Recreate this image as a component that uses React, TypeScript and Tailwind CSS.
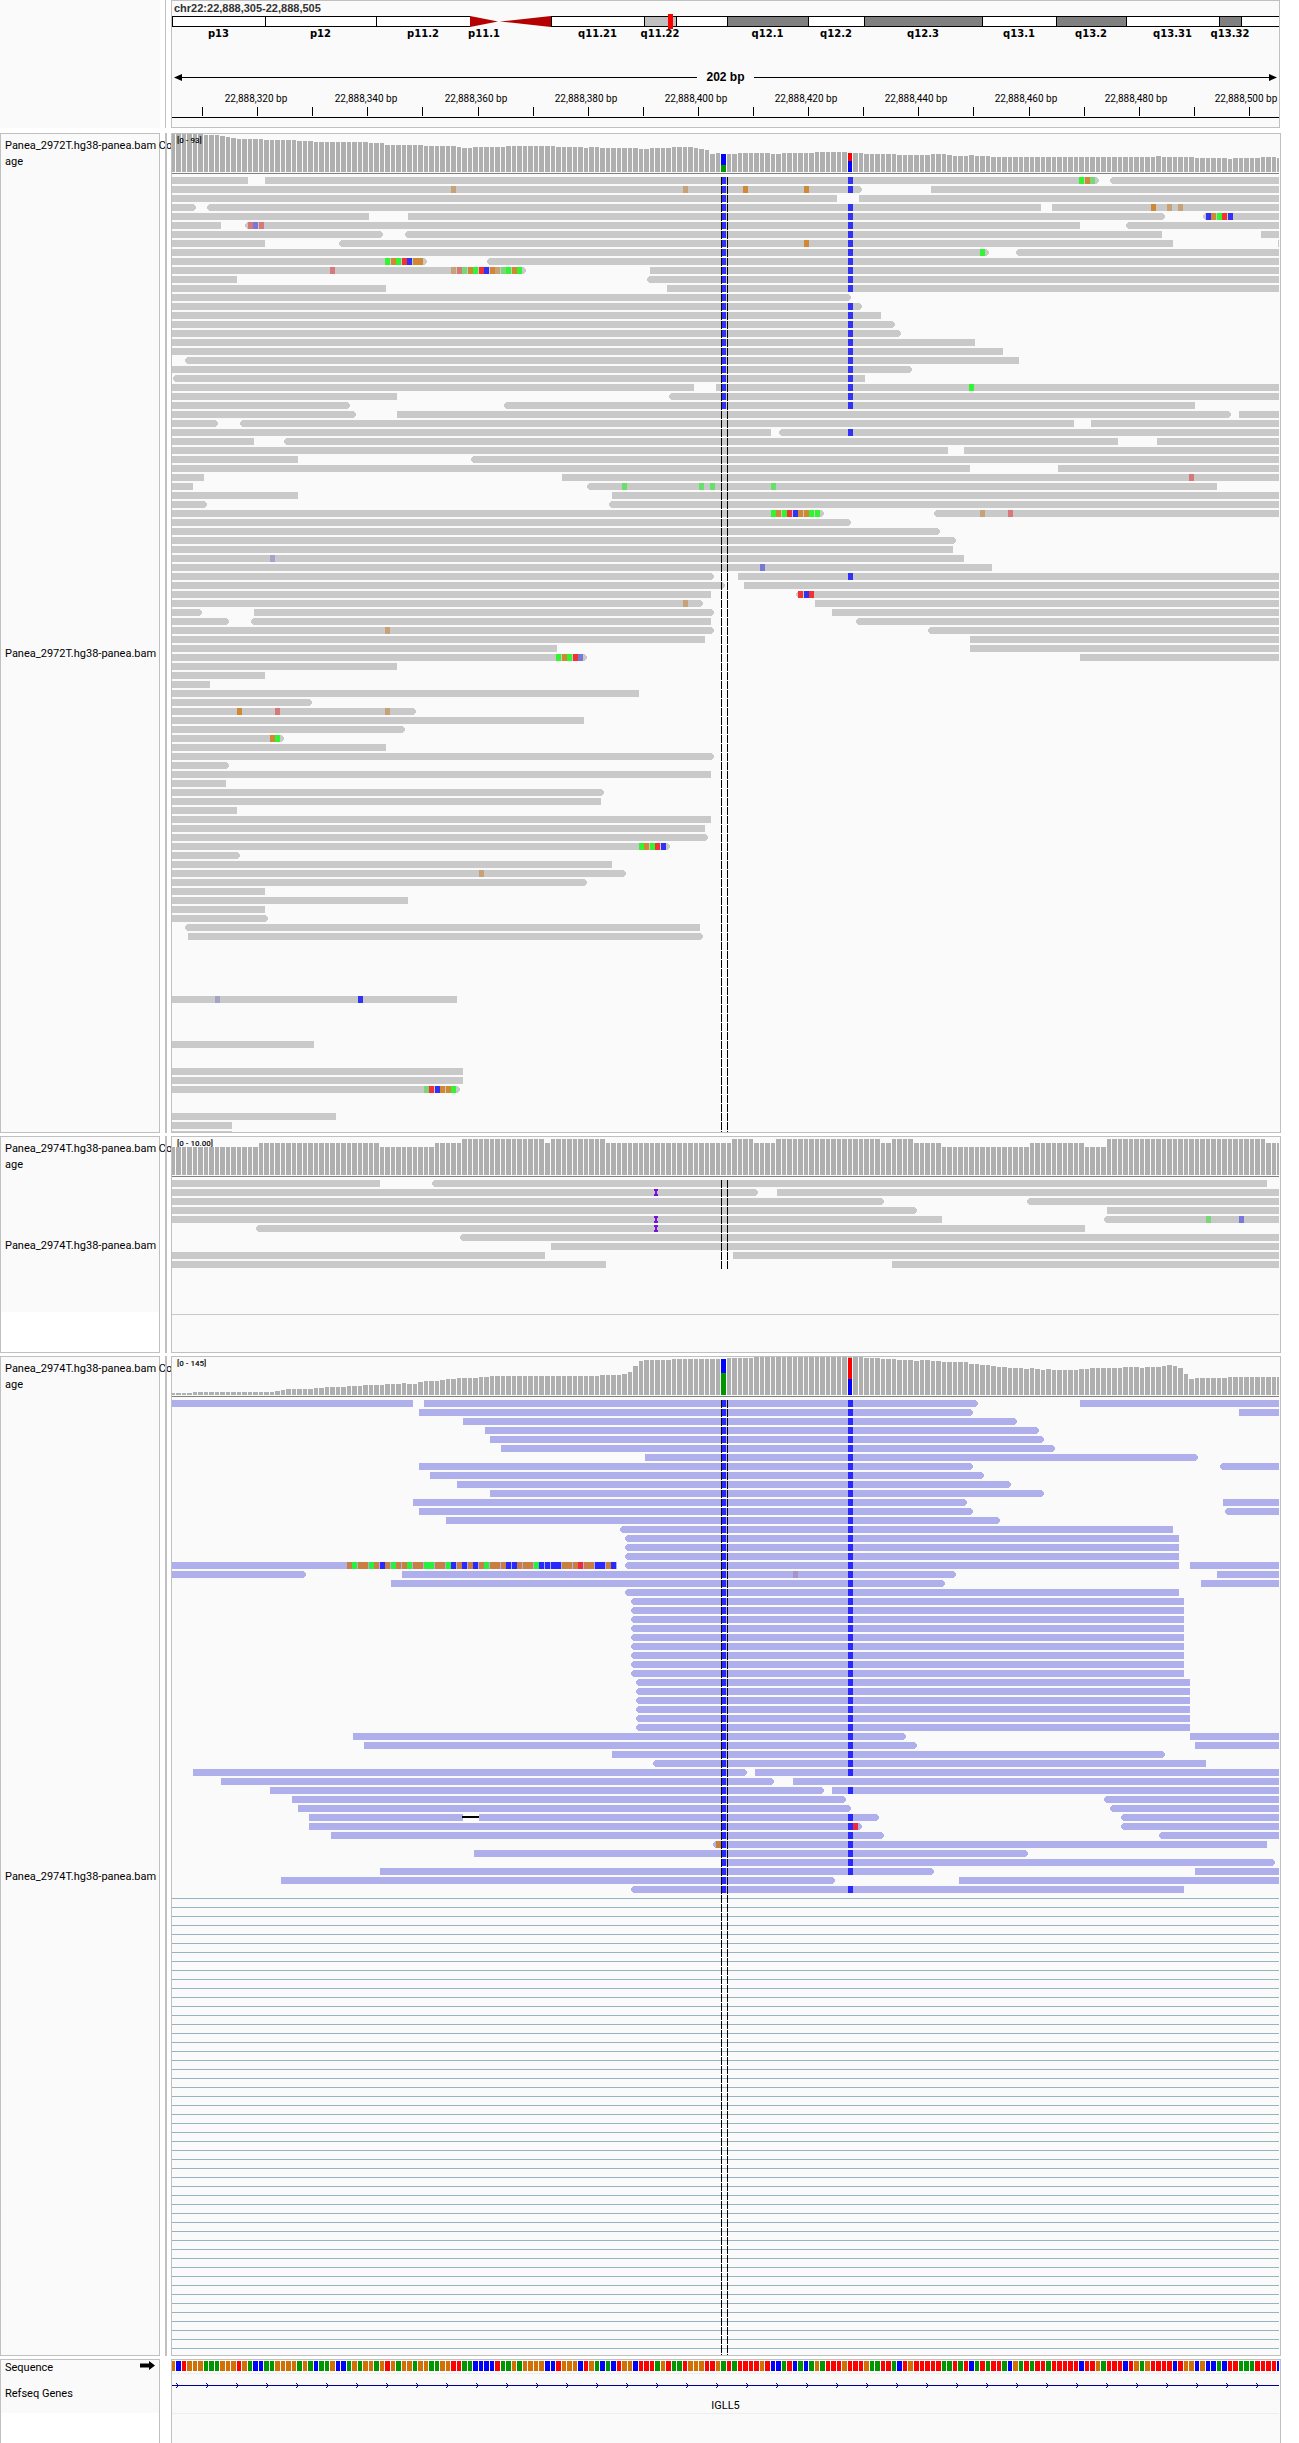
import React from "react";

const PLOT_WIDTH = 1107;
const BASES = 202;
const PITCH = PLOT_WIDTH / 201;
const ROW = 9;
const READ_HEIGHT = 7;

const baseX = (k: number) => Math.round(k * PITCH + 4);
const readX = (k: number) => Math.ceil(k * PITCH + 4);

type Palette = Record<string, string>;

const grayPalette: Palette = {
  read: "#c9c9c9",
  A: "#32f532",
  C: "#3232f5",
  G: "#d08834",
  T: "#f53232",
  a: "#78d878",
  c: "#7878d8",
  g: "#c8a277",
  t: "#d87878",
  m: "#69df69",
  w: "#a4a4c8",
};

const bluePalette: Palette = {
  read: "#afafeb",
  A: "#28f03c",
  C: "#2828ff",
  G: "#c87f41",
  T: "#f02840",
  t: "#a695c8",
};

const sequencePalette: Palette = {
  A: "#009600",
  C: "#0000ff",
  G: "#d17105",
  T: "#ff0000",
};

/* One line per pileup row: "start:end" spans, then mismatching bases after the bar.
   "<" and ">" mark the pointed end of a read, L and R the edges of the view. */
const pileup2972 = `
L:13 16:167> <170:R|99C 122C 164A 165G 166a
L:124> 137:R|50g 92g 99C 103G 114G 122C
L:120 124:R|99C
L:3> <6:157 159:R|99C 122C 177G 180g 182g
L:35 42:179> <187:R|99C 122C 187C 188G 189A 190T 191C
L:8 <13:164 <173:R|13t 14c 15t 99C 122C
L:37> <42:179 197:R|99C 122C
L:16 <30:181 200:R|99C 114G 122C
L:147> <153:R|99C 122C 146A
L:45> <57:R|38A 39G 40A 41T 42C 43G 44G 99C 122C
L:63> 86:R|28t 50g 51t 52a 53G 54A 55T 56C 57G 58g 59a 60A 61G 62A 99C 122C
L:11 <86:R|99C 122C
L:38 89:R|99C 122C
L:122>|99C
L:124>|99C 122C
L:128|99C 122C
L:130>|99C 122C
L:131>|99C 122C
L:145|99C 122C
L:150|99C 122C
<2:153|99C 122C
L:133>|99C 122C
<0:125|99C 122C
L:94 98:R|99C 122C 144A
L:40 <90:R|99C 122C
L:31> <60:185|99C 122C
L:32> 40:191> 193:R|
L:7> <12:163 166:R|
L:108 <110:R|122C
L:14 <20:171 178:R|
L:140 143:R|
L:22 <54:R|
L:144 160:R|
L:5 70:R|184t
L:3 <75:189|81m 95m 97m 108m
L:22 79:R|
L:5> <79:R|
L:117> <138:R|108A 109G 110A 111T 112C 113G 114G 115A 116A 146g 151t
L:122>|
L:138>|
L:141>|
L:141|
L:143|17w
L:148|106c
L:97> 102:R|122C
L:99> 103:R|
L:97 <113:R|113T 114C 115T
L:95> 116:R|92g
L:4> 14:97> 119:R|
L:9> <14:97 <124:R|
L:97> <137:R|38g
L:96 144:R|
L:69 144:R|
L:74> 164:R|69A 70G 71A 72T 73c
L:40|
L:16|
L:6|
L:84|
L:24>|
L:43>|11G 18t 38g
L:74|
L:41>|
L:19>|17G 18A
L:38|
L:97>|
L:9>|
L:97|
L:9|
L:77>|
L:77|
L:11|
L:97|
L:96|
L:96>|
L:89>|84A 85G 86A 87T 88C
L:11>|
L:79|
L:81>|55g
L:74>|
L:16|
L:42|
L:16|
L:16>|
<2:95|
2:95>|
|
|
|
|
|
|
L:51|7w 33C
|
|
|
|
L:25|
|
|
L:52|
L:52|
L:51>|45a 46T 47C 48G 49G 50A
|
|
L:29|
L:10|
L:10|`;

const pileup2974Short = `
L:37 <47:198|
L:105> 109:R|87I
L:128> <155:R|
L:134> 169:R|
L:139 <169:R|87I 187a 193c
<15:165|87I
<52:R|
68:R|
L:67 101:R|
L:78 130:R|`;

const clippedBases = "GAGGAGCGAGGAGGAAGGACGCGCGAGGGCCGGGACCCCGGGTGGCCGC"
  .split("")
  .map((base, i) => `${31 + i}${base}`)
  .join(" ");

const repeatRow = (row: string, times: number) => Array(times).fill(row).join("\n");

const pileup2974Deep = `
L:43 45:145> 164:R|99C 122C
44:144> 193:R|99C 122C
52:152>|99C 122C
56:156>|99C 122C
57:157>|99C 122C
59:159>|99C 122C
85:185>|99C 122C
44:144> <190:R|99C 122C
46:146>|99C 122C
51:151>|99C 122C
57:157>|99C 122C
43:143> 190:R|99C 122C
44:144> <191:R|99C 122C
49:149>|99C 122C
<81:181|99C 122C
${repeatRow("<82:182|99C 122C", 3)}
L:80 <82:182 184:R|99C 122C ${clippedBases}
L:23> 41:141> 189:R|99C 122C 112t
39:139> 186:R|99C 122C
<82:182|99C 122C
${repeatRow("<83:183|99C 122C", 9)}
${repeatRow("<84:184|99C 122C", 6)}
32:132> 184:R|99C 122C
34:134> 185:R|99C 122C
79:179>|99C 122C
<87:187|99C 122C
3:103> 105:R|99C 122C
8:108> 112:R|99C
17:117> 119:R|99C 122C
21:121> <169:R|99C
22:122> <170:R|99C
24:52 55:127> <172:R|99C 122C 52D
24:124> <172:R|99C 122C 123T
28:128> <179:R|99C 122C
<98:198|98G 99C 122C
54:154>|99C 122C
99:199>|99C 122C
37:137> 185:R|99C 122C
19:119> 142:R|99C
<83:183|99C 122C`;

/* Run-length coverage: [bar height, number of bases]. */
type Runs = [number, number][];

const coverage2972: Runs = [
  [38, 6], [37, 3], [36, 1], [35, 1], [34, 1], [33, 5], [32, 6], [31, 3], [30, 10], [29, 3],
  [27, 7], [26, 6], [25, 1], [24, 2], [25, 6], [26, 9], [25, 5], [24, 1], [25, 2], [24, 7],
  [23, 2], [24, 4], [25, 4], [24, 1], [23, 1], [22, 1], [18, 1], [19, 1], [18, 3], [19, 6],
  [18, 2], [19, 6], [20, 6], [19, 3], [18, 6], [17, 6], [18, 3], [17, 1], [16, 3], [17, 1],
  [16, 3], [15, 30], [16, 1], [15, 6], [14, 6], [13, 1], [14, 5], [15, 3], [14, 1],
];

const coverage2974Short: Runs = [
  [28, 16], [32, 22], [28, 10], [32, 5], [36, 15], [32, 1], [36, 10], [32, 23], [36, 4],
  [32, 4], [36, 19], [32, 2], [36, 4], [32, 5], [28, 16], [32, 10], [28, 4], [36, 29], [32, 3],
];

const coverage2974Deep: Runs = [
  [2, 4], [3, 15], [4, 1], [5, 1], [6, 5], [7, 2], [8, 4], [9, 3], [10, 4], [11, 3], [12, 1],
  [11, 2], [13, 1], [14, 3], [15, 1], [16, 2], [17, 4], [18, 2], [19, 20], [20, 4], [21, 1],
  [23, 1], [29, 1], [34, 1], [35, 5], [36, 10], [37, 5], [38, 20], [37, 3], [36, 3], [35, 3],
  [34, 1], [35, 2], [34, 2], [33, 5], [31, 2], [30, 2], [29, 1], [28, 2], [27, 3], [26, 1],
  [27, 1], [26, 1], [25, 1], [26, 1], [25, 5], [26, 2], [27, 6], [28, 3], [27, 1], [28, 3],
  [29, 1], [30, 1], [29, 1], [27, 1], [21, 1], [16, 1], [17, 6], [18, 10],
];

/* Allele splits: base index and [colour, height] from the top down. */
type Split = { k: number; parts: [string, number][] };

const splits2972: Split[] = [
  { k: 99, parts: [["#0000ff", 11], ["#009600", 7]] },
  { k: 122, parts: [["#ff0000", 8], ["#0000ff", 11]] },
];
const splits2974: Split[] = [
  { k: 99, parts: [["#0000ff", 14], ["#009600", 22]] },
  { k: 122, parts: [["#ff0000", 21], ["#0000ff", 16]] },
];

const sequence =
  "G" +
  "CTGGGAAAGGGTGACCAAGGGGAGACAAGCCAGAGGAGTGAGGAGGAAGG" +
  "TTAACCCCTAAGAGGGGCCTGGGCTGACACTGGCTTTAGTAATGGGTTGA" +
  "TATTTTGTCCATCACAGATTTGTTTGAATTACTGTTTTTAATATCATATT" +
  "ACGATATTATTTTTCTTGATTTCTGAGTTTTCTGGCGCCACTTAAATTTT" +
  "C";

const bands: [string, number, string][] = [
  ["p13", 93, "white"], ["p12", 111, "white"], ["p11.2", 94, "white"], ["p11.1", 28, "acenP"],
  ["", 53, "acenQ"], ["q11.21", 93, "white"], ["q11.22", 32, "light"], ["", 51, "white"],
  ["q12.1", 81, "dark"], ["q12.2", 56, "white"], ["q12.3", 118, "dark"], ["q13.1", 74, "white"],
  ["q13.2", 70, "dark"], ["q13.31", 93, "white"], ["q13.32", 22, "dark"], ["", 38, "white"],
];

const bandFill: Record<string, string> = {
  white: "bg-white",
  light: "bg-[#c0c0c0]",
  dark: "bg-[#808080]",
};

function Plot({ height, className, children, label }: {
  height: number;
  className: string;
  label: string;
  children: React.ReactNode;
}) {
  return (
    <svg
      viewBox={`0 0 ${PLOT_WIDTH} ${height}`}
      preserveAspectRatio="none"
      shapeRendering="crispEdges"
      role="img"
      aria-label={label}
      className={`block w-full ${className}`}
    >
      {children}
    </svg>
  );
}

function Coverage({ runs, splits = [], range }: { runs: Runs; splits?: Split[]; range: string }) {
  const heights = runs.flatMap(([h, n]) => Array<number>(n).fill(h));
  return (
    <div className="relative">
      <Plot height={43} className="h-[43px]" label="Coverage">
        {heights.slice(0, BASES).map((h, i) => {
          const x = Math.max(0, baseX(i - 1));
          return <rect key={i} x={x} y={38 - h} width={baseX(i) - 1 - x} height={h} fill="#afafaf" />;
        })}
        {splits.map(({ k, parts }) => {
          let y = 38 - parts.reduce((sum, p) => sum + p[1], 0);
          return parts.map(([fill, h]) => {
            const top = y;
            y += h;
            return (
              <rect key={`${k}${fill}`} x={baseX(k)} y={top} width={baseX(k + 1) - 1 - baseX(k)} height={h} fill={fill} />
            );
          });
        })}
        <rect x={0} y={39} width={PLOT_WIDTH} height={1} fill="#808080" />
      </Plot>
      <span className="absolute left-[5px] top-0 text-[8px] font-medium leading-[13px] text-black">{range}</span>
    </div>
  );
}

function Read({ span, y, fill }: { span: string; y: number; fill: string }) {
  const [from, to] = span.split(":");
  const start = from === "L" ? 0 : readX(parseInt(from.replace("<", ""), 10));
  const end = to === "R" ? PLOT_WIDTH : readX(parseInt(to, 10));
  const left = from.startsWith("<");
  const right = to.endsWith(">");
  const mid = y + READ_HEIGHT / 2;
  const bottom = y + READ_HEIGHT;
  const points = [
    `${start},${y}`,
    `${end},${y}`,
    right ? `${end + 3},${mid - 1} ${end + 3},${mid + 1}` : "",
    `${end},${bottom}`,
    `${start},${bottom}`,
    left ? `${start - 3},${mid + 1} ${start - 3},${mid - 1}` : "",
  ].join(" ");
  return <polygon points={points} fill={fill} />;
}

function Mark({ code, y, palette }: { code: string; y: number; palette: Palette }) {
  const k = parseInt(code, 10);
  const kind = code.slice(-1);
  const x = baseX(k);
  if (kind === "I") {
    return <path d={`M${x - 1} ${y}h4v2h-1v3h1v2h-4v-2h1v-3h-1z`} fill="#7514dc" />;
  }
  if (kind === "D") {
    return <rect x={x} y={y + 2} width={readX(k + 3) - x} height={2} fill="#000" />;
  }
  return <rect x={x} y={y} width={5} height={READ_HEIGHT} fill={palette[kind]} />;
}

function Pileup({ rows, palette, height, className, ruleFrom, label }: {
  rows: string;
  palette: Palette;
  height: number;
  className: string;
  ruleFrom?: number;
  label: string;
}) {
  const lines = rows.trim().split("\n");
  const ruleCount = ruleFrom ? Math.ceil((height - ruleFrom) / ROW) : 0;
  return (
    <Plot height={height} className={className} label={label}>
      {Array.from({ length: ruleCount }, (_, i) => (
        <rect key={`rule${i}`} x={0} y={(ruleFrom ?? 0) + i * ROW} width={PLOT_WIDTH} height={1} fill="#94b4c4" />
      ))}
      {lines.map((line, i) => {
        const [spans, marks] = line.split("|");
        const y = i * ROW;
        return (
          <g key={i}>
            {spans.split(" ").filter(Boolean).map((s) => (
              <Read key={s} span={s} y={y} fill={palette.read} />
            ))}
            {marks.split(" ").filter(Boolean).map((m) => (
              <Mark key={m} code={m} y={y} palette={palette} />
            ))}
          </g>
        );
      })}
      {[549, 555].map((x) => (
        <line key={x} x1={x + 0.5} x2={x + 0.5} y1={0} y2={height} stroke="#000" strokeWidth={1} strokeDasharray="8 1" />
      ))}
    </Plot>
  );
}

function TrackRow({ names, children }: { names: React.ReactNode; children: React.ReactNode }) {
  return (
    <section className="flex items-stretch pr-[18px]">
      <div className="flex w-40 shrink-0 flex-col border border-[#c0c0c0]">{names}</div>
      <div className="ml-[5px] mr-1 w-0.5 shrink-0 bg-[#c0c0c0]" />
      <div className="relative flex min-w-0 flex-1 flex-col overflow-hidden border border-[#c0c0c0] bg-[#fafafa] pr-px">
        {children}
      </div>
    </section>
  );
}

function BamNames({ sample }: { sample: string }) {
  return (
    <div className="flex flex-1 flex-col bg-[#fafafa] pl-1">
      <div className="h-[43px] whitespace-nowrap pt-1 leading-4">
        {sample} Co
        <br />
        age
      </div>
      <div className="flex flex-1 items-center whitespace-nowrap">{sample}</div>
    </div>
  );
}

function Ideogram() {
  return (
    <div className="relative">
      <div className="flex">
        {bands.map(([name, size, kind], i) => (
          <div key={i} className="flex min-w-0 basis-0 flex-col items-center" style={{ flexGrow: size }}>
            {kind.startsWith("acen") ? (
              <svg viewBox="0 0 54 11" preserveAspectRatio="none" className="block h-[11px] w-full" aria-hidden="true">
                <path d={kind === "acenP" ? "M0 0V11L54 5.5Z" : "M54 0V11L2 5.5Z"} fill="#b40000" />
              </svg>
            ) : (
              <div className={`h-[11px] w-full border-y border-l border-black ${bandFill[kind]}`} />
            )}
            <span className="h-3 whitespace-nowrap font-['DejaVu_Sans',sans-serif] text-[10px] font-bold leading-[13px]">
              {name}
            </span>
          </div>
        ))}
      </div>
      <div className="absolute -top-0.5 left-[44.8%] h-[15px] w-[5px] bg-[#ff0000]" />
    </div>
  );
}

function Arrow({ flip = false }: { flip?: boolean }) {
  return (
    <svg width="8" height="7" viewBox="0 0 8 7" className="shrink-0" aria-hidden="true">
      <path d={flip ? "M8 3.5L0 0V7Z" : "M0 3.5L8 0V7Z"} fill="#000" />
    </svg>
  );
}

function Ruler() {
  const labels = Array.from({ length: 10 }, (_, i) => `22,888,${320 + i * 20} bp`);
  return (
    <div>
      <div className="flex h-4 items-center px-0.5">
        <Arrow />
        <div className="h-px flex-1 bg-black" />
        <span className="w-[57px] text-center text-[12px] font-bold leading-4 font-['Liberation_Sans',sans-serif]">202 bp</span>
        <div className="h-px flex-1 bg-black" />
        <Arrow flip />
      </div>
      <div className="mt-[7px] flex h-[14px] text-[10px] leading-[14px]">
        <div className="basis-0" style={{ flexGrow: 84 }} />
        {labels.map((text, i) => (
          <React.Fragment key={text}>
            <span className="flex w-0 justify-center whitespace-nowrap">{text}</span>
            <div className="basis-0" style={{ flexGrow: i === labels.length - 1 ? 33 : 110 }} />
          </React.Fragment>
        ))}
      </div>
      <Plot height={12} className="mt-px h-3" label="Genome position ticks">
        {Array.from({ length: 20 }, (_, i) => (
          <rect key={i} x={Math.round(30 + i * 55.1)} y={0} width={1} height={9} fill="#000" />
        ))}
        <rect x={0} y={10} width={PLOT_WIDTH} height={1} fill="#000" />
      </Plot>
    </div>
  );
}

function Header() {
  return (
    <header className="flex h-32 pr-[19px]">
      <div className="w-40 shrink-0 bg-[#fafafa]" />
      <div className="ml-[5px] mr-[5px] w-px shrink-0 bg-[#c0c0c0]" />
      <div className="min-w-0 flex-1 border border-[#c0c0c0] bg-[#fafafa]">
        <h1 className="h-[15px] pl-0.5 text-[11px] font-bold leading-[15px] text-[#333] font-['Liberation_Sans',sans-serif]">
          chr22:22,888,305-22,888,505
        </h1>
        <Ideogram />
        <div className="h-[30px]" />
        <Ruler />
      </div>
    </header>
  );
}

function GeneTrack() {
  return (
    <>
      <Plot height={14} className="h-[14px] shrink-0" label="Reference sequence">
        {sequence.split("").map((base, i) => {
          const x = Math.max(0, baseX(i - 1));
          return <rect key={i} x={x} y={1} width={Math.max(1, baseX(i) - 1 - x)} height={10} fill={sequencePalette[base]} />;
        })}
        <rect x={0} y={13} width={PLOT_WIDTH} height={1} fill="#eeeeee" />
      </Plot>
      <Plot height={25} className="h-[25px] shrink-0" label="IGLL5 gene">
        <rect x={0} y={11} width={PLOT_WIDTH} height={1} fill="#000096" />
        {Array.from({ length: 37 }, (_, i) => (
          <path key={i} d={`M${4 + i * 30} 9h1v1h1v3h-1v1h-1v-1h1v-3h-1z`} fill="#000096" />
        ))}
      </Plot>
      <div className="h-[15px] border-b border-[#eeeeee] text-center text-[11px] leading-[14px]">IGLL5</div>
    </>
  );
}

export default function App() {
  return (
    <main className="flex min-h-screen flex-col bg-white text-[11px] text-black font-['Roboto',sans-serif]">
      <Header />
      <div className="mt-[5px] flex flex-1 flex-col gap-[3px]">
        <TrackRow names={<BamNames sample="Panea_2972T.hg38-panea.bam" />}>
          <Coverage runs={coverage2972} splits={splits2972} range="[0 - 93]" />
          <Pileup rows={pileup2972} palette={grayPalette} height={955} className="h-[955px]" label="Alignments of Panea_2972T" />
        </TrackRow>

        <TrackRow
          names={
            <>
              <BamNames sample="Panea_2974T.hg38-panea.bam" />
              <div className="h-10 bg-white" />
            </>
          }
        >
          <Coverage runs={coverage2974Short} range="[0 - 10.00]" />
          <Pileup rows={pileup2974Short} palette={grayPalette} height={90} className="h-[90px]" label="Alignments of Panea_2974T" />
          <div className="h-[45px] border-b border-[#c8c8c8]" />
          <div className="h-[37px]" />
        </TrackRow>

        <TrackRow names={<BamNames sample="Panea_2974T.hg38-panea.bam" />}>
          <Coverage runs={coverage2974Deep} splits={splits2974} range="[0 - 145]" />
          <Pileup
            rows={pileup2974Deep}
            palette={bluePalette}
            height={955}
            className="h-[955px]"
            ruleFrom={498}
            label="Deep alignments of Panea_2974T"
          />
        </TrackRow>

        <section className="flex flex-1 items-stretch pr-[18px]">
          <div className="w-40 shrink-0 border border-b-0 border-[#c0c0c0]">
            <div className="flex h-[15px] items-center justify-between bg-[#fafafa] pl-1 pr-1">
              <span className="leading-[15px]">Sequence</span>
              <svg width="15" height="9" viewBox="0 0 15 9" className="mb-1" aria-hidden="true">
                <path d="M0 2.5H9V0L15 4.5L9 9V6.5H0Z" fill="#000" />
              </svg>
            </div>
            <div className="flex h-[38px] items-center bg-[#fafafa] pl-1">Refseq Genes</div>
          </div>
          <div className="ml-[11px] flex min-w-0 flex-1 flex-col border border-b-0 border-[#c0c0c0] bg-[#fafafa] pr-px">
            <GeneTrack />
          </div>
        </section>
      </div>
    </main>
  );
}
